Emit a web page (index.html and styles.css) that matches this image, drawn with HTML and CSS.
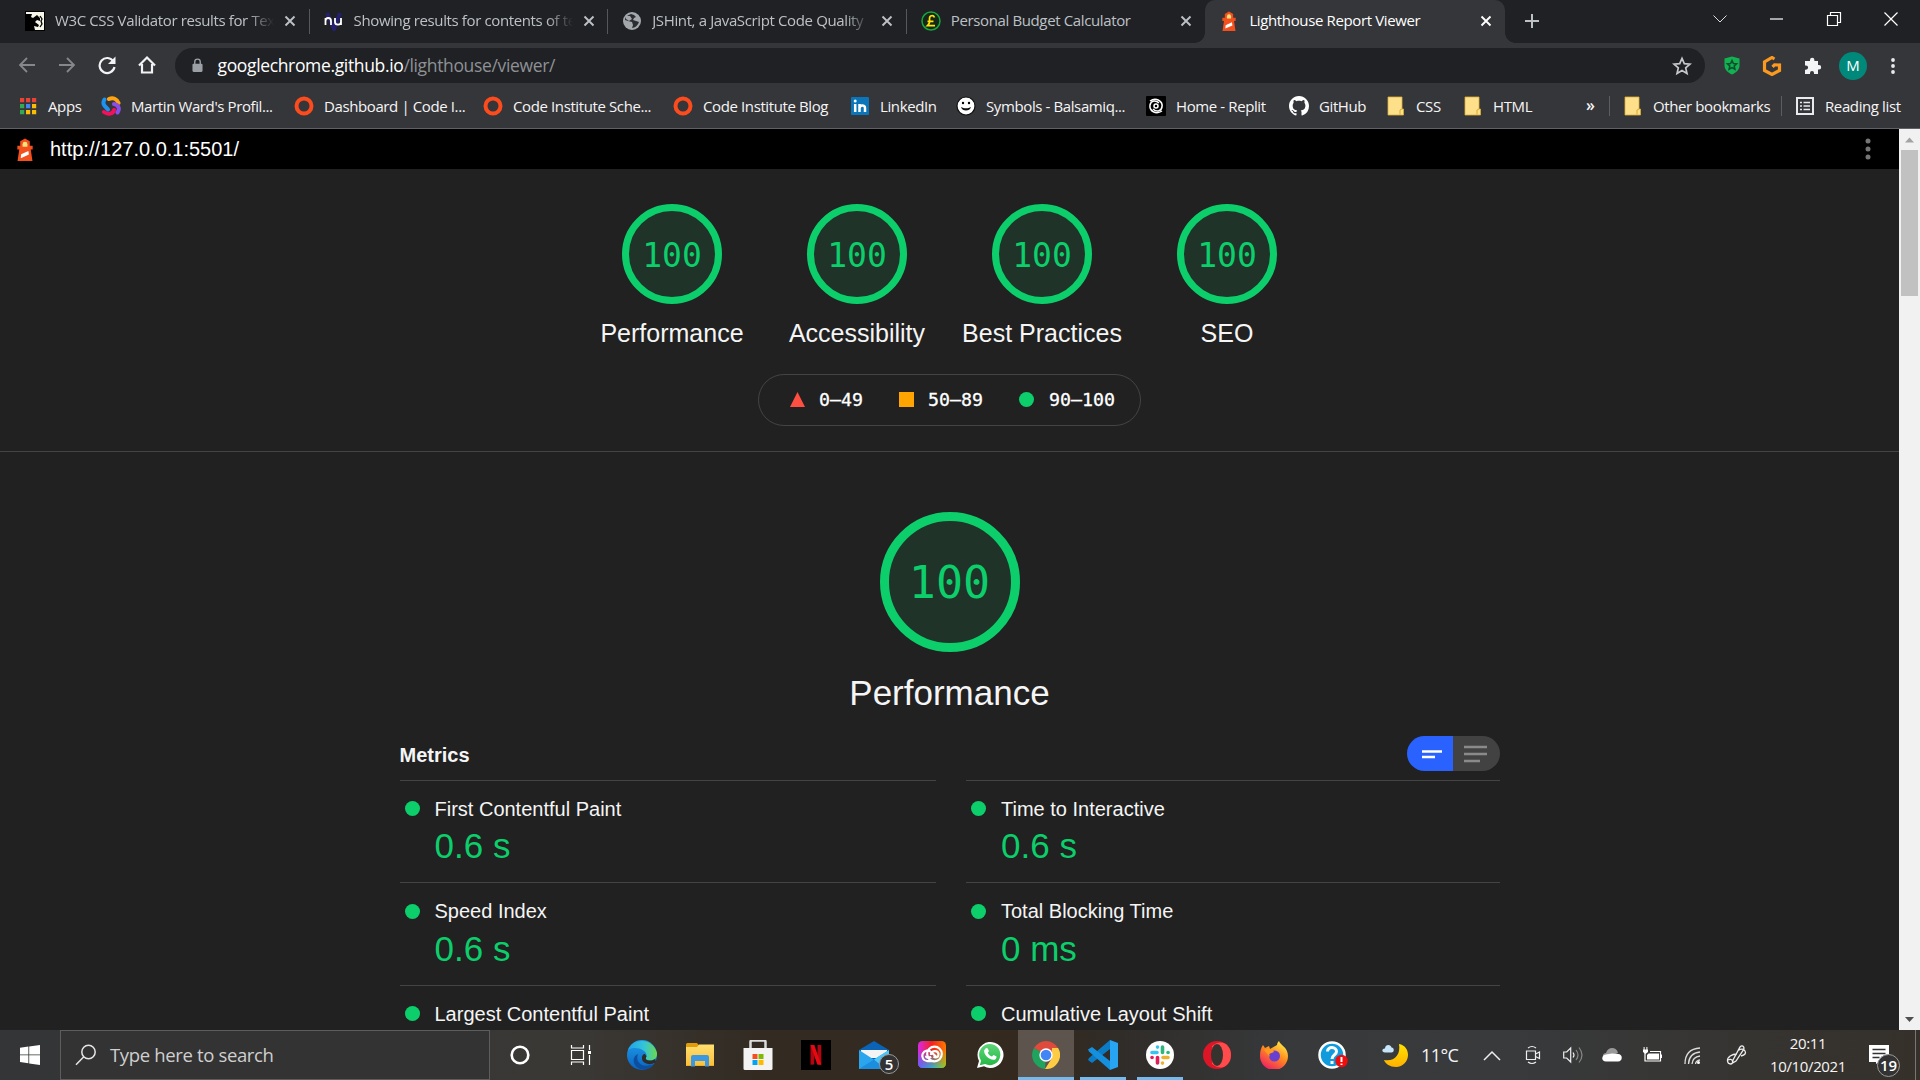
FILE: index.html
```html
<!DOCTYPE html>
<html lang="en">
<head>
<meta charset="utf-8">
<title>Lighthouse Report Viewer</title>
<link rel="stylesheet" href="styles.css">
</head>
<body>
<svg class="defs" width="0" height="0" aria-hidden="true">
  <defs>
    <linearGradient id="edgeA" x1="0" y1="0" x2="1" y2="0"><stop offset="0" stop-color="#1fa2ec"/><stop offset=".55" stop-color="#35c4d8"/><stop offset="1" stop-color="#6ad94c"/></linearGradient>
    <linearGradient id="edgeB" x1="0" y1="0" x2="0" y2="1"><stop offset="0" stop-color="#1f9de8"/><stop offset="1" stop-color="#0a63c0"/></linearGradient>
    <linearGradient id="ccA" x1="0" y1="0" x2="1" y2="0"><stop offset="0" stop-color="#d829e8"/><stop offset=".5" stop-color="#f5231c"/><stop offset="1" stop-color="#ff7a00"/></linearGradient>
    <linearGradient id="ccB" x1="0" y1="0" x2="1" y2="0"><stop offset="0" stop-color="#5a62ff"/><stop offset=".5" stop-color="#26b6e0"/><stop offset="1" stop-color="#8fd41c"/></linearGradient>
    <linearGradient id="ccM" x1="0" y1="0" x2="0" y2="1"><stop offset=".3" stop-color="#000"/><stop offset="1" stop-color="#fff"/></linearGradient>
    <mask id="ccMask"><rect width="28" height="28" fill="url(#ccM)"/></mask>
    <linearGradient id="ffA" x1=".8" y1="0" x2=".2" y2="1"><stop offset="0" stop-color="#fff04a"/><stop offset=".45" stop-color="#ff8a1e"/><stop offset="1" stop-color="#f0156b"/></linearGradient>
    <linearGradient id="moonA" x1="0" y1="0" x2="0" y2="1"><stop offset="0" stop-color="#ffe100"/><stop offset="1" stop-color="#ffb000"/></linearGradient>
    <linearGradient id="waA" x1="0" y1="0" x2="0" y2="1"><stop offset="0" stop-color="#5fd67a"/><stop offset="1" stop-color="#25b845"/></linearGradient>
    <linearGradient id="foldA" x1="0" y1="0" x2="0" y2="1"><stop offset="0" stop-color="#ffdf70"/><stop offset="1" stop-color="#fbbf3a"/></linearGradient>
    <symbol id="lighthouse" viewBox="0 0 20 24">
      <path d="M10 .5l5 3V8h3v4h-2l1.800 12H2.200L4 12H2V8h3V3.500z" fill="#f4501e"/>
      <path d="M10 4A2.500 2.500 0 0 1 12.500 6.500V9h-5V6.500A2.500 2.500 0 0 1 10 4z" fill="#ffe27a"/>
      <path d="M6 17l7.500-3.500.6 3.800L5.600 21z" fill="#fff"/>
    </symbol>
    <symbol id="close" viewBox="0 0 12 12"><path d="M1.500 1.500l9 9m0-9l-9 9" stroke="currentColor" stroke-width="1.900"/></symbol>
    <symbol id="folder" viewBox="0 0 20 20"><path d="M2 1h14v12h1.500v6H2z" fill="#ffe08a" stroke="#dcae3a" stroke-width=".8"/><path d="M14 18.500v-4.500l2-1" fill="none" stroke="#d9a92f"/></symbol>
    <symbol id="ring" viewBox="0 0 20 20"><circle cx="10" cy="10" r="7.500" fill="none" stroke="#fc4b1c" stroke-width="4"/></symbol>
  </defs>
</svg>

<header class="tabstrip">
  <div class="tab">
    <svg class="favicon" viewBox="0 0 20 20"><path d="M0 0h20v20H0z"/><path d="M1 1h18v18h-9l-1-4 4 1 1-2-4-3 2-2 3 1V7l-3-3-4 3-2-1 1-3H1z" fill="#f5f5ea"/><path d="M15 5l2 3-1 2 1 3-2 3" fill="none" stroke="#000" stroke-width="1.300"/></svg>
    <span class="title fade">W3C CSS Validator results for Text</span><svg class="x"><use href="#close"/></svg>
  </div>
  <div class="tab">
    <svg class="favicon" viewBox="0 0 20 20"><path d="M3 2l7 16 6-16" fill="none" stroke="#24206e" stroke-width="4"/><path d="M1.500 14V7m0 3c0-4 5.500-4 5.500 0v4M11 7v4c0 3.500 6 3.500 6 0V7v7" stroke="#fff" stroke-width="1.800" fill="none"/></svg>
    <span class="title fade">Showing results for contents of text</span><svg class="x"><use href="#close"/></svg>
  </div>
  <div class="tab">
    <svg class="favicon" viewBox="0 0 20 20"><circle cx="10" cy="10" r="9" fill="#a4a8ad"/><path d="M9 3c-3 1-6 3-6 6l3 1 4 1 1 3-1 3c3 0 6-3 7-6l-3-1-3-1 1-2 2-1-2-2z" fill="#2b2d31"/><path d="M4 5l4 0 2 3-3 2-3-2z" fill="#a4a8ad"/></svg>
    <span class="title fade">JSHint, a JavaScript Code Quality</span><svg class="x"><use href="#close"/></svg>
  </div>
  <div class="tab">
    <svg class="favicon" viewBox="0 0 20 20"><circle cx="10" cy="10" r="9" fill="#16261a" stroke="#17a63c" stroke-width="1.500"/><path d="M13.500 6.500C12.500 4 8.500 4 8.500 7.500c0 2.500 1 4.500-2 7.200h7.500M6.500 10.300h6" fill="none" stroke="#ffe600" stroke-width="1.700"/></svg>
    <span class="title">Personal Budget Calculator</span><svg class="x"><use href="#close"/></svg>
  </div>
  <div class="tab active">
    <svg class="favicon"><use href="#lighthouse"/></svg>
    <span class="title">Lighthouse Report Viewer</span><svg class="x"><use href="#close"/></svg>
  </div>
  <svg class="plus" viewBox="0 0 14 14"><path d="M7 0v14M0 7h14" stroke="#bdc1c6" stroke-width="2"/></svg>
  <div class="winctl">
    <svg viewBox="0 0 16 16"><path d="M1.500 4.500L8 11l6.500-6.500" fill="none" stroke="#ddd"/></svg>
    <svg viewBox="0 0 16 16"><path d="M1 8h13" stroke="#fff" stroke-width="1.200"/></svg>
    <svg viewBox="0 0 16 16"><path d="M1.500 4.500h10v10h-10zM4.500 4V1.500h10v10H12" fill="none" stroke="#fff" stroke-width="1.200"/></svg>
    <svg viewBox="0 0 16 16"><path d="M1.500 1.500l13 13m0-13l-13 13" stroke="#fff" stroke-width="1.200"/></svg>
  </div>
</header>

<nav class="toolbar">
  <div class="navbtns">
    <svg viewBox="0 0 20 20" class="dim"><path d="M18 10H3m7-7l-7 7 7 7"/></svg>
    <svg viewBox="0 0 20 20" class="dim"><path d="M2 10h15m-7-7l7 7-7 7"/></svg>
    <svg viewBox="0 0 20 20"><path d="M16.500 6.500a7.500 7.500 0 1 0 1 5.500"/><path d="M18.500 1.500v7.500H11z" class="solid"/></svg>
    <svg viewBox="0 0 20 20"><path d="M2 10.500L10 2.500l8 8M5 9v8.500h10V9"/></svg>
  </div>
  <div class="omnibox">
    <svg class="lock" viewBox="0 0 12 16"><path d="M3 7V4a3 3 0 0 1 6 0v3" fill="none" stroke="#9aa0a6" stroke-width="1.500"/><rect x=".5" y="6" width="11" height="9" rx="1.200" fill="#9aa0a6"/></svg>
    <span class="url">googlechrome.github.io<i>/lighthouse/viewer/</i></span>
    <svg class="star" viewBox="0 0 20 20"><path d="M10 2.300l2.300 5.300 5.700.5-4.300 3.800 1.300 5.600-5-3-5 3 1.300-5.600L2 8.100l5.700-.5z" fill="none" stroke="#c4c7cb" stroke-width="1.700"/></svg>
  </div>
  <div class="exts">
    <svg viewBox="0 0 20 20"><path d="M10 .5l7.500 2v7c0 4-3 7-7.500 9-4.500-2-7.500-5-7.500-9v-7z" fill="#12b152"/><path d="M10 4.500l1.400 3 3.200.3-2.400 2.200.7 3.200-2.900-1.700-2.900 1.700.7-3.200-2.400-2.200 3.200-.3z" fill="none" stroke="#0c4c2c" stroke-width="1.500"/></svg>
    <svg viewBox="0 0 20 20"><path d="M12.500 3L10 1.500 2.500 6v8.500L10 18.500l7.500-4V9l-5-.2-2 2" fill="none" stroke="#fb9a1e" stroke-width="3.200"/></svg>
    <svg viewBox="0 0 20 20"><path d="M8 4a2.200 2.200 0 0 1 4.400 0v1H16v4h1a2.200 2.200 0 0 1 0 4.400h-1V18h-4v-1a2 2 0 0 0-4 0v1H3v-4.300h1a2 2 0 0 0 0-4.200H3V5h5z" fill="#f1f3f4"/></svg>
    <span class="avatar">M</span>
    <svg viewBox="0 0 20 20" fill="#e8eaed"><circle cx="10" cy="4" r="1.900"/><circle cx="10" cy="10" r="1.900"/><circle cx="10" cy="16" r="1.900"/></svg>
  </div>
</nav>

<nav class="bookmarks">
  <div class="list">
    <a><svg viewBox="0 0 20 20"><g fill="#ea4335"><path d="M2 2h4.200v4.200H2zM8 2h4.200v4.200H8zM14 2h4.200v4.200H14z"/></g><path fill="#34a853" d="M2 8h4.200v4.200H2zM2 14h4.200v4.200H2z"/><path fill="#4285f4" d="M8 8h4.200v4.200H8z"/><path fill="#fbbc05" d="M14 8h4.200v4.200H14zM8 14h4.200v4.200H8zM14 14h4.200v4.200H14z"/></svg>Apps</a>
    <a><svg viewBox="0 0 20 20" fill="none" stroke-width="4" stroke-linecap="round"><path d="M8 3C12 1 16 3 17.500 7" stroke="#ffa411"/><path d="M3.500 3.500c-3 5 1 7 3.500 10" stroke="#1d93ef"/><path d="M3 16c4 3 9 2 10-2" stroke="#f5105c"/><path d="M13 8c5 1 6 5 3.500 8.500" stroke="#8b4de8"/></svg>Martin Ward's Profil...</a>
    <a><svg><use href="#ring"/></svg>Dashboard | Code I...</a>
    <a><svg><use href="#ring"/></svg>Code Institute Sche...</a>
    <a><svg><use href="#ring"/></svg>Code Institute Blog</a>
    <a><svg viewBox="0 0 20 20"><rect x="1" y="1" width="18" height="18" rx="1" fill="#0a76b9"/><path d="M5.200 8v8M9.500 16V8m0 4.500c0-4 5.500-4 5.500-.5v4" stroke="#fff" stroke-width="2.500" fill="none"/><circle cx="5.200" cy="5" r="1.500" fill="#fff"/></svg>LinkedIn</a>
    <a><svg viewBox="0 0 20 20"><circle cx="10" cy="10" r="9" fill="#fff" stroke="#111" stroke-width="1.200"/><circle cx="7" cy="7" r="1.200"/><circle cx="13" cy="7" r="1.200"/><path d="M5 11c1 4.800 9 4.800 10 0-3 1.800-7 1.800-10 0z" fill="#111"/></svg>Symbols - Balsamiq...</a>
    <a><svg viewBox="0 0 20 20"><rect width="20" height="20" rx="1"/><g fill="none" stroke="#fff" stroke-width="1.500"><circle cx="10" cy="10" r="2"/><path d="M4 5c6-4 13 0 12 6-1 5-6 5-9 2"/><path d="M16 15c-6 4-13 0-12-6 1-5 6-5 9-2"/></g></svg>Home - Replit</a>
    <a><svg viewBox="0 0 16 16"><path fill="#fff" d="M8 0C3.580 0 0 3.580 0 8c0 3.540 2.290 6.530 5.470 7.590.4.070.55-.17.55-.38 0-.19-.01-.82-.01-1.490-2.010.37-2.530-.49-2.690-.94-.09-.23-.48-.94-.82-1.130-.28-.15-.68-.52-.01-.53.63-.01 1.080.58 1.230.82.72 1.210 1.870.87 2.330.66.070-.52.28-.87.51-1.070-1.780-.2-3.640-.89-3.640-3.950 0-.87.31-1.590.82-2.150-.08-.2-.36-1.020.08-2.120 0 0 .67-.21 2.200.82.640-.18 1.320-.27 2-.27s1.360.09 2 .27c1.530-1.040 2.200-.82 2.200-.82.440 1.100.16 1.920.08 2.120.51.56.82 1.270.82 2.150 0 3.070-1.870 3.750-3.650 3.950.29.25.54.73.54 1.480 0 1.070-.01 1.930-.01 2.200 0 .21.15.46.55.38A8.010 8.010 0 0 0 16 8c0-4.420-3.580-8-8-8z"/></svg>GitHub</a>
    <a><svg><use href="#folder"/></svg>CSS</a>
    <a><svg><use href="#folder"/></svg>HTML</a>
    <b>»</b>
    <a class="sep"><svg><use href="#folder"/></svg>Other bookmarks</a>
    <a class="sep"><svg viewBox="0 0 20 20"><path d="M2 2h16v16H2z" fill="none" stroke="#e8eaed" stroke-width="2"/><path d="M5 6.500h2M5 10h2m-2 3.500h2M8.500 6.500H15M8.500 10H15m-6.500 3.500H15" stroke="#e8eaed" stroke-width="1.600"/></svg>Reading list</a>
  </div>
</nav>

<main class="page">
  <div class="report">
    <div class="topbar">
      <svg class="logo"><use href="#lighthouse"/></svg><span>http://127.0.0.1:5501/</span>
      <svg class="more" viewBox="0 0 6 22"><circle cx="3" cy="3" r="2.500"/><circle cx="3" cy="11" r="2.500"/><circle cx="3" cy="19" r="2.500"/></svg>
    </div>
    <section class="scores">
      <div class="gauges">
        <div class="gauge"><div class="dial">100</div><span>Performance</span></div>
        <div class="gauge"><div class="dial">100</div><span>Accessibility</span></div>
        <div class="gauge"><div class="dial">100</div><span>Best Practices</span></div>
        <div class="gauge"><div class="dial">100</div><span>SEO</span></div>
      </div>
      <div class="scale">
        <svg viewBox="0 0 15 15"><path d="M7.500 0L15 15H0z" fill="#ff4e42"/></svg><span>0–49</span>
        <svg viewBox="0 0 15 15"><path d="M0 0h15v15H0z" fill="#ffa400"/></svg><span>50–89</span>
        <svg viewBox="0 0 15 15"><circle cx="7.500" cy="7.500" r="7.500" fill="#0cce6b"/></svg><span>90–100</span>
      </div>
    </section>
    <section class="category">
      <div class="dial big">100</div>
      <h1>Performance</h1>
      <div class="metrics-head">
        <h2>Metrics</h2>
        <div class="toggle">
          <span class="on"><svg viewBox="0 0 24 24"><path d="M4 9.500h20M4 15h13" stroke="#fff" stroke-width="2.600"/></svg></span>
          <span><svg viewBox="0 0 24 24"><path d="M0 5h23M0 12h23M0 19h16" stroke="#8a8a8a" stroke-width="2.400"/></svg></span>
        </div>
      </div>
      <div class="metrics">
        <div class="metric"><span>First Contentful Paint</span><strong>0.6 s</strong></div>
        <div class="metric"><span>Time to Interactive</span><strong>0.6 s</strong></div>
        <div class="metric low"><span>Speed Index</span><strong>0.6 s</strong></div>
        <div class="metric low"><span>Total Blocking Time</span><strong>0 ms</strong></div>
        <div class="metric"><span>Largest Contentful Paint</span></div>
        <div class="metric"><span>Cumulative Layout Shift</span></div>
      </div>
    </section>
  </div>
  <div class="scrollbar">
    <svg viewBox="0 0 21 21"><path d="M6 13.500h9l-4.500-5z" fill="#a3a3a3"/></svg>
    <div class="thumb"></div>
    <svg viewBox="0 0 21 21"><path d="M6 8h9l-4.500 5z" fill="#505050"/></svg>
  </div>
</main>

<footer class="taskbar">
  <div class="cell"><svg width="20" height="20" viewBox="0 0 20 20" fill="#fff"><path d="M0 2.800L8.400 1.600v7.900H0zM9.200 1.500L20 0v9.500H9.200zM0 10.300h8.400v8L0 17.100zM9.200 10.300H20V20L9.200 18.400z"/></svg></div>
  <div class="search"><svg width="22" height="22" viewBox="0 0 22 22"><circle cx="13.500" cy="8" r="6.700" fill="none" stroke="#e6e6e6" stroke-width="1.500"/><path d="M8.800 12.800L1 20.800" stroke="#e6e6e6" stroke-width="1.500"/></svg><span>Type here to search</span></div>
  <div class="cell"><svg width="20" height="20" viewBox="0 0 20 20"><circle cx="10" cy="10" r="8.300" fill="none" stroke="#fff" stroke-width="2.600"/></svg></div>
  <div class="cell"><svg width="22" height="20" viewBox="0 0 22 20" fill="none" stroke="#fff" stroke-width="1.200"><path d="M1.500 5.500h12v9h-12zM1.500 0v3h12V0M1.500 20v-3h12v3M19.500 0v5M19.500 10v10"/><path d="M18 6h3v3h-3z" fill="#fff" stroke="none"/></svg></div>

  <div class="cell"><svg width="30" height="30" viewBox="0 0 30 30"><circle cx="15" cy="15" r="15" fill="url(#edgeB)"/><path d="M1 10C5-2 26-3 30 13c.5 5-3 8-8 7.500-4-.5-3.500-2.500-2.500-4C21 10 8 5 1 10z" fill="url(#edgeA)"/><path d="M11 14c-3 8 4 15 16 10-6 8-17 7-20-1-1-4 0-7 4-9z" fill="#0e4e9e"/><path d="M19.500 16.500c-1 1.500-1.500 3.500 2.500 4 3 .3 5-.5 6-1.500l1 3c-5 4-13 2-14-3-.5-3 1-5 3-5z" fill="#2f2b26"/></svg></div>
  <div class="cell"><svg width="28" height="24" viewBox="0 0 28 24"><path d="M0 1.500Q0 0 1.500 0H11l2.500 3H28v20H0z" fill="#e29c0a"/><path d="M0 4h11l2-2.500h15v21H0z" fill="url(#foldA)"/><path d="M5 23.500V14q0-2 2-2h14q2 0 2 2v9.500h-4V18H9v5.500z" fill="#3b97df"/></svg></div>
  <div class="cell"><svg width="30" height="30" viewBox="0 0 30 30"><path d="M7.500 9V2q0-1.500 1.500-1.500h12Q22.500.5 22.500 2v7" fill="none" stroke="#dcdcdc" stroke-width="2.500"/><path d="M.5 8h29v20.500q0 1.500-1.500 1.500H2q-1.500 0-1.500-1.500z" fill="#f3f3f3"/><path d="M9.500 14h5v5h-5z" fill="#f25022"/><path d="M15.500 14h5v5h-5z" fill="#7fba00"/><path d="M9.500 20h5v5h-5z" fill="#00a4ef"/><path d="M15.500 20h5v5h-5z" fill="#ffb900"/></svg></div>
  <div class="cell"><svg width="30" height="30" viewBox="0 0 30 30"><path d="M0 0h30v30H0z"/><path d="M9.500 5h3.800v19.500l-3.800.3zM16.500 5h3.800v19.800l-3.800-.3z" fill="#b1060f"/><path d="M9.500 5h3.800l7 19.800-4-.4z" fill="#e50914"/></svg></div>
  <div class="cell mail"><svg width="30" height="28" viewBox="0 0 30 28"><path d="M0 9L15 0l15 9v19H0z" fill="#0a63b5"/><path d="M2 9h26v8H2z" fill="#f4f4f4"/><path d="M0 9l17 11-10 8H0z" fill="#2aa5ee"/><path d="M30 9L0 28h30z" fill="#1b8ee0"/><path d="M30 9L15 18.500l6 5L30 20z" fill="#4cc6f8"/></svg><em>5</em></div>
  <div class="cell"><svg width="28" height="28" viewBox="0 0 28 28"><rect width="28" height="27" rx="4.500" fill="url(#ccA)"/><rect width="28" height="27" rx="4.500" fill="url(#ccB)" mask="url(#ccMask)"/><g fill="none" stroke="#fff" stroke-width="2.200"><circle cx="16.500" cy="13" r="7.300"/><path d="M16 20.200h-6.500a5.300 5.300 0 1 1 4-8.800l5 4.600"/><path d="M13 15.500c-1.500 2-5 1.500-5-.8"/><path d="M13 14c0-5 7-5 7.500-1 .3 3-2.500 4.500-5 2.500"/></g></svg></div>
  <div class="cell"><svg width="28" height="28" viewBox="0 0 28 28"><path d="M1 27l2-7A13 13 0 1 1 8 25.200z" fill="#fff"/><path d="M3.800 24.200l1.300-4.500a10.600 10.600 0 1 1 4 3.400z" fill="url(#waA)"/><path d="M9.500 7.500c1-1 2-.7 2.400.3l1 2.300c-.2 1-1 1.300-1 1.800.8 1.700 2.300 3 4 3.700.6-.2 1-1.300 1.800-1.600l2.800 1.400c.4 2-1.300 3.400-3 3.400-5 0-10-5.500-9.300-9.500z" fill="#fff"/></svg></div>
  <div class="cell current"><svg width="28" height="28" viewBox="0 0 28 28"><path d="M14 14L1.900 7A14 14 0 0 1 26.100 7z" fill="#de4b3c"/><path d="M14 14l-1 14A14 14 0 0 1 1.900 7z" fill="#20a35c"/><path d="M26.100 7a14 14 0 0 1-13.100 21L20 17V7z" fill="#fdcb44"/><circle cx="14" cy="14" r="6.700" fill="#fff"/><circle cx="14" cy="14" r="5.300" fill="#4285f4"/></svg></div>
  <div class="cell open"><svg width="30" height="30" viewBox="0 0 30 30"><path d="M22 0l8 3v24l-8 3z" fill="#27a5f2"/><path d="M22 0v9L4 23l-4-3 1-2z" fill="#0b7bc6"/><path d="M22 30v-9L4 7 0 9.500l1 2z" fill="#1590de"/></svg></div>
  <div class="cell open"><svg width="28" height="28" viewBox="0 0 28 28"><circle cx="14" cy="14" r="14" fill="#fff"/><g stroke-width="3.600" stroke-linecap="round"><path d="M6 11.500h5M11.500 6v.1" stroke="#36c5f0"/><path d="M16.500 6v5.500M22 11.500h.1" stroke="#2eb67d"/><path d="M17 16.500h5M16.500 22v.1" stroke="#ecb22e"/><path d="M11.500 16.500V22M6 16.500h.1" stroke="#e01e5a"/></g></svg></div>
  <div class="cell"><svg width="28" height="28" viewBox="0 0 28 28"><circle cx="14" cy="14" r="14" fill="#dc1626"/><path d="M9 5C19-3 28 4 28 14S19 31 9 23z" fill="#ff4b4b"/><ellipse cx="14" cy="14" rx="6" ry="11" fill="#36332f"/></svg></div>
  <div class="cell"><svg width="28" height="28" viewBox="0 0 28 28"><path d="M17 4c0-2 1-3 2-4 1 4 9 6 9 15a14 14 0 0 1-28 0C0 10 1 7 3 4l2 3 4-2 1 3z" fill="url(#ffA)"/><circle cx="14.500" cy="15" r="5.500" fill="#6a3fd0"/><path d="M4 9c4-2 8-2 10 2l-5 2 1 3z" fill="#ff9a1e"/></svg></div>
  <div class="cell"><svg width="30" height="28" viewBox="0 0 30 28"><circle cx="14" cy="14" r="12.500" fill="#109bdc" stroke="#fff" stroke-width="2.500"/><path d="M9.500 10.500c0-5.500 9-5 9 0 0 3.500-4.500 3.500-4.500 7.500m0 2v3" fill="none" stroke="#fff" stroke-width="3"/><circle cx="23.500" cy="20" r="6.200" fill="#f20d0d"/><path d="M23.500 16v5m0 1.500V24" stroke="#fff" stroke-width="2"/></svg></div>

  <div class="cell weather"><svg width="26" height="24" viewBox="0 0 26 24"><path d="M17 1c6 1 9 6 9 11 0 6-5 12-12 12C8 24 3.500 21 2 17c10 2 17-5 15-16z" fill="url(#moonA)"/><path d="M3 9.500C-1 9.500 0 5 3 5.500 3 1 9 1 9.500 4.500c3 0 3 5 0 5z" fill="#c5e4fa"/></svg><span>11°C</span></div>
  <div class="cell"><svg width="18" height="11" viewBox="0 0 18 11"><path d="M1 10l8-8 8 8" fill="none" stroke="#eee" stroke-width="1.500"/></svg></div>
  <div class="cell"><svg width="16" height="20" viewBox="0 0 16 20" fill="none" stroke="#eee" stroke-width="1.200"><path d="M1.500 6h9v8.500h-9zM10.500 9l4-2v6.500l-4-2M3 3q4-3 8 0M3 17q4 3 8 0"/></svg></div>
  <div class="cell"><svg width="20" height="18" viewBox="0 0 20 18" fill="none" stroke="#eee" stroke-width="1.200"><path d="M.7 6h3l4-4v14l-4-4h-3zM10 6.500q2 2.500 0 5"/><path d="M13 4q4 5 0 10M16 1.500q6 7.500 0 15" stroke="#888"/></svg></div>
  <div class="cell"><svg width="20" height="14" viewBox="0 0 20 14"><path d="M4 10C-1 9 1 5 4 5c2-7 11-6 12 0z" fill="#999"/><path d="M4 13.500c-5 0-5-6.500 0-7l6-1 6 .5c5 0 5 7.500 0 7.500z" fill="#fff"/></svg></div>
  <div class="cell"><svg width="20" height="16" viewBox="0 0 20 16"><path d="M3 5.500V14h15.500V4.500H8" fill="none" stroke="#fff" stroke-width="1.200"/><path d="M6.500 6.500h10.500V12.500H5V8zM18.500 7.500H20V11h-1.500zM1 2.500h5V5L3.500 7 1 5zM1.600 0h1v3h-1zM4.400 0h1v3h-1z" fill="#fff"/></svg></div>
  <div class="cell"><svg width="17" height="17" viewBox="0 0 17 17" fill="none" stroke="#ddd" stroke-width="1.300"><path d="M1 17Q1 2 16 1M4.500 17Q5 6 16 5M8 17q.5-7 8-8M11.500 17q.5-3.500 4.500-4"/><circle cx="14.500" cy="15.500" r="1.500" fill="#fff" stroke="none"/></svg></div>
  <div class="cell"><svg width="22" height="20" viewBox="0 0 22 20" fill="none" stroke="#eee" stroke-width="1.300"><path d="M7 15L14 2q2-2 3.500-.3 1 1.300 0 3L10 16l-3.500 2zM12 5.500q5-3 7 .5t-4 5M11 9c-5 0-10 3-9.500 7 .5 4 6 4 5 0-.5-2-3-2-4.500-1"/></svg></div>
  <div class="cell clock"><span>20:11</span><span>10/10/2021</span></div>
  <div class="cell notif"><svg width="20" height="19" viewBox="0 0 20 19"><path d="M0 0h20v17H10l-3 2v-2H0z" fill="#fff"/><path d="M3.500 4.500h13M3.500 8.500h13M3.500 12.500h7" stroke="#333" stroke-width="1.300"/></svg><em>19</em></div>
  <div class="desk"></div>
</footer>
</body>
</html>
```
FILE: styles.css
```css
* { box-sizing: border-box; }
html, body { margin: 0; height: 100%; overflow: hidden; }
body {
  display: flex;
  flex-direction: column;
  background: #212121;
  color: #f5f5f5;
  font-family: "Open Sans", "Noto Sans", sans-serif;
  font-size: 15px;
}
svg { flex: none; display: block; }
.defs { position: absolute; }

/* tab strip */
.tabstrip {
  display: flex;
  align-items: center;
  height: 43px;
  flex: none;
  padding-left: 11px;
  background: #202124;
  color: #bdc1c6;
  letter-spacing: -0.370px;
}
.tab {
  display: flex;
  align-items: center;
  width: 298.600px;
  height: 43px;
  padding: 0 13.500px 2px 14px;
  position: relative;
}
.tab::after {
  content: "";
  position: absolute;
  right: 0;
  top: 9px;
  width: 1px;
  height: 25px;
  background: #55575b;
}
.tab:nth-child(4)::after, .tab.active::after { display: none; }
.favicon { width: 20px; height: 20px; margin-right: 10px; }
.title { flex: 1; overflow: hidden; white-space: nowrap; line-height: 22px; margin-top: -1px; }
.fade { -webkit-mask-image: linear-gradient(90deg, #000 88%, transparent); mask-image: linear-gradient(90deg, #000 88%, transparent); }
.x { width: 12px; height: 12px; margin-left: 10px; }
.tab.active { width: 300px; background: #35363a; border-radius: 10px 10px 0 0; color: #fff; }
.tab.active::before {
  content: "";
  position: absolute;
  left: -10px;
  right: -10px;
  bottom: 0;
  height: 10px;
  background:
    radial-gradient(circle at 0 0, transparent 9.500px, #35363a 10px) left / 10px 10px no-repeat,
    radial-gradient(circle at 100% 0, transparent 9.500px, #35363a 10px) right / 10px 10px no-repeat;
}
.plus { width: 14px; height: 14px; margin: -1px 0 0 20px; }
.winctl { display: flex; gap: 41px; margin: -5px 21px 0 auto; }
.winctl svg { width: 16px; height: 16px; }

/* toolbar */
.toolbar {
  display: flex;
  align-items: center;
  height: 45px;
  flex: none;
  background: #35363a;
}
.navbtns { display: flex; gap: 20px; width: 175px; padding: 0 0 2px 17px; }
.navbtns svg { width: 20px; height: 20px; fill: none; stroke: #f1f3f4; stroke-width: 2.200; }
.navbtns .dim { stroke: #85878a; stroke-width: 1.800; }
.navbtns .solid { fill: #f1f3f4; stroke: none; }
.omnibox {
  display: flex;
  align-items: center;
  width: 1530px;
  height: 35px;
  padding: 0 13px 0 17px;
  border-radius: 18px;
  background: #202124;
}
.lock { width: 11px; height: 15px; }
.url { margin: -2px 0 0 14.500px; flex: 1; font-size: 17.500px; color: #fff; letter-spacing: -0.350px; }
.url i { font-style: normal; color: #8e9196; }
.star { width: 20px; height: 20px; }
.exts { display: flex; align-items: center; gap: 20px; padding-left: 17px; }
.exts svg { width: 20px; height: 20px; }
.avatar {
  width: 28px;
  height: 28px;
  margin: 0 -4px 0 -3px;
  border-radius: 50%;
  background: #00897b;
  color: #fff;
  text-align: center;
  line-height: 27px;
}

/* bookmarks */
.bookmarks { flex: none; height: 41px; background: #35363a; border-bottom: 1px solid #606164; padding-left: 18px; }
.bookmarks .list {
  display: grid;
  grid-template-columns: 83px 193px 189px 190px 177px 106px 190px 143px 97px 77px 123px 23px 172px 130px;
  height: 35px;
  align-items: center;
  letter-spacing: -0.390px;
}
.bookmarks a { display: flex; align-items: center; gap: 10px; white-space: nowrap; line-height: 18px; }
.bookmarks svg { width: 20px; height: 20px; }
.bookmarks b { font-size: 16px; font-weight: 600; line-height: 20px; padding-bottom: 2px; }
.sep { border-left: 1px solid #5c5d61; padding-left: 13px; height: 20px; }

/* page */
.page { display: flex; flex: 1; min-height: 0; }
.report { width: 1899px; overflow: hidden; font-family: "Liberation Sans", Arial, sans-serif; }
.topbar {
  display: flex;
  align-items: center;
  height: 40px;
  padding: 0 28px 0 15px;
  background: #000;
  font-size: 20px;
  color: #fff;
}
.logo { width: 20px; height: 23px; margin-right: 15px; }
.more { width: 6px; height: 22px; margin-left: auto; fill: #757575; }
.scores { height: 283px; padding-top: 35px; border-bottom: 1px solid #444; }
.gauges { display: flex; justify-content: center; }
.gauge { width: 185px; display: flex; flex-direction: column; align-items: center; gap: 14px; font-size: 25px; line-height: 30px; }
.dial {
  width: 100px;
  height: 100px;
  border: 7px solid #0cce6b;
  border-radius: 50%;
  background: #1f3329;
  color: #0cce6b;
  font: 33px/89px "DejaVu Sans Mono", monospace;
  text-align: center;
}
.scale {
  display: flex;
  align-items: center;
  width: 383px;
  height: 52px;
  margin: 26px auto 0;
  padding: 0 0 1px 31px;
  border: 1px solid #444;
  border-radius: 26px;
  font: 18.300px "DejaVu Sans Mono", monospace;
  color: #fff;
  white-space: nowrap;
}
.scale svg { width: 15px; height: 15px; }
.scale span { margin: 0 36px 0 14px; -webkit-text-stroke: 0.300px #fff; }
.scale span:nth-of-type(3) { margin-left: 15px; }
.category { width: 1100px; margin: 60px auto 0; }
.dial.big { width: 140px; height: 140px; margin: 0 auto; border-width: 9.500px; font-size: 45px; line-height: 124px; }
h1 { margin: 20px 0 0; font-size: 35px; line-height: 42px; font-weight: 400; text-align: center; }
.metrics-head { display: flex; justify-content: space-between; align-items: center; height: 35px; margin: 22px 0 9px; }
h2 { margin: 3px 0 0; font-size: 20px; }
.toggle { display: flex; width: 93px; height: 35px; border-radius: 18px; overflow: hidden; }
.toggle span { flex: 1; display: flex; align-items: center; justify-content: center; background: #424242; }
.toggle .on { background: #2962ff; }
.toggle svg { width: 24px; height: 24px; }
.metrics { display: grid; grid-template-columns: 536px 534px; grid-template-rows: 102px 103px 102px; column-gap: 30px; }
.metric { position: relative; border-top: 1px solid #444; padding: 16px 0 0 35px; font-size: 20px; line-height: 24px; }
.metric:nth-child(even) { padding-left: 35.500px; }
.metric::before { content: ""; position: absolute; left: 5px; top: 20px; width: 15px; height: 15px; border-radius: 50%; background: #0cce6b; }
.metric span, .metric strong { display: block; }
.metric strong { margin-top: 5px; font-size: 35px; line-height: 40px; font-weight: 400; color: #0cce6b; }
.metric.low::before { top: 21px; }
.metric.low strong { margin-top: 6px; }
.scrollbar { width: 21px; background: #f1f1f1; display: flex; flex-direction: column; align-items: center; }
.scrollbar svg { width: 21px; height: 21px; }
.thumb { width: 17px; height: 146px; margin-bottom: auto; background: #c1c1c1; }

/* taskbar */
.taskbar {
  display: grid;
  grid-template-columns: 60px 430px 59px 64px repeat(6, 58px) 57px 56px 57px repeat(3, 57px) 61px 107px 43px 40px 39px 40px 40px 40px 50px 92px 61px 6px;
  height: 50px;
  flex: none;
  background: linear-gradient(90deg, #333536 0, #3a3835 580px, #332b22 760px, #33291f 1040px, #302d2a 1130px, #37393b 1290px, #383a3c 1500px, #363533 1700px, #35302a 1920px);
}
.cell { display: flex; align-items: center; justify-content: center; position: relative; }
.search { display: flex; align-items: center; gap: 13px; padding-left: 14px; background: #333; border: 1px solid #5d5d5d; font-size: 18.500px; letter-spacing: -0.350px; color: #cfcfcf; }
.search span { padding-bottom: 2px; }
.current { background: #5c544d; }
.current::after, .open::after { content: ""; position: absolute; bottom: 0; left: 0; right: 0; height: 3px; background: #76b9ed; }
.open::after { left: 6px; right: 5px; }
.cell em {
  position: absolute;
  left: 34px;
  top: 24px;
  width: 20px;
  height: 20px;
  border: 1px solid #9a9a9a;
  border-radius: 50%;
  background: #333;
  color: #fff;
  font-style: normal;
  font-size: 15px;
  font-weight: 600;
  line-height: 18px;
  text-align: center;
}
.weather { justify-content: flex-start; gap: 13px; padding-left: 19px; font-size: 18px; letter-spacing: -0.600px; }
.clock { flex-direction: column; font-size: 15px; line-height: 23px; letter-spacing: -0.350px; }
.notif { justify-content: flex-start; padding: 0 0 2px 15px; }
.notif em { left: 23px; width: 23px; height: 23px; line-height: 21px; }
.desk { border-left: 1px solid #777; }
```
